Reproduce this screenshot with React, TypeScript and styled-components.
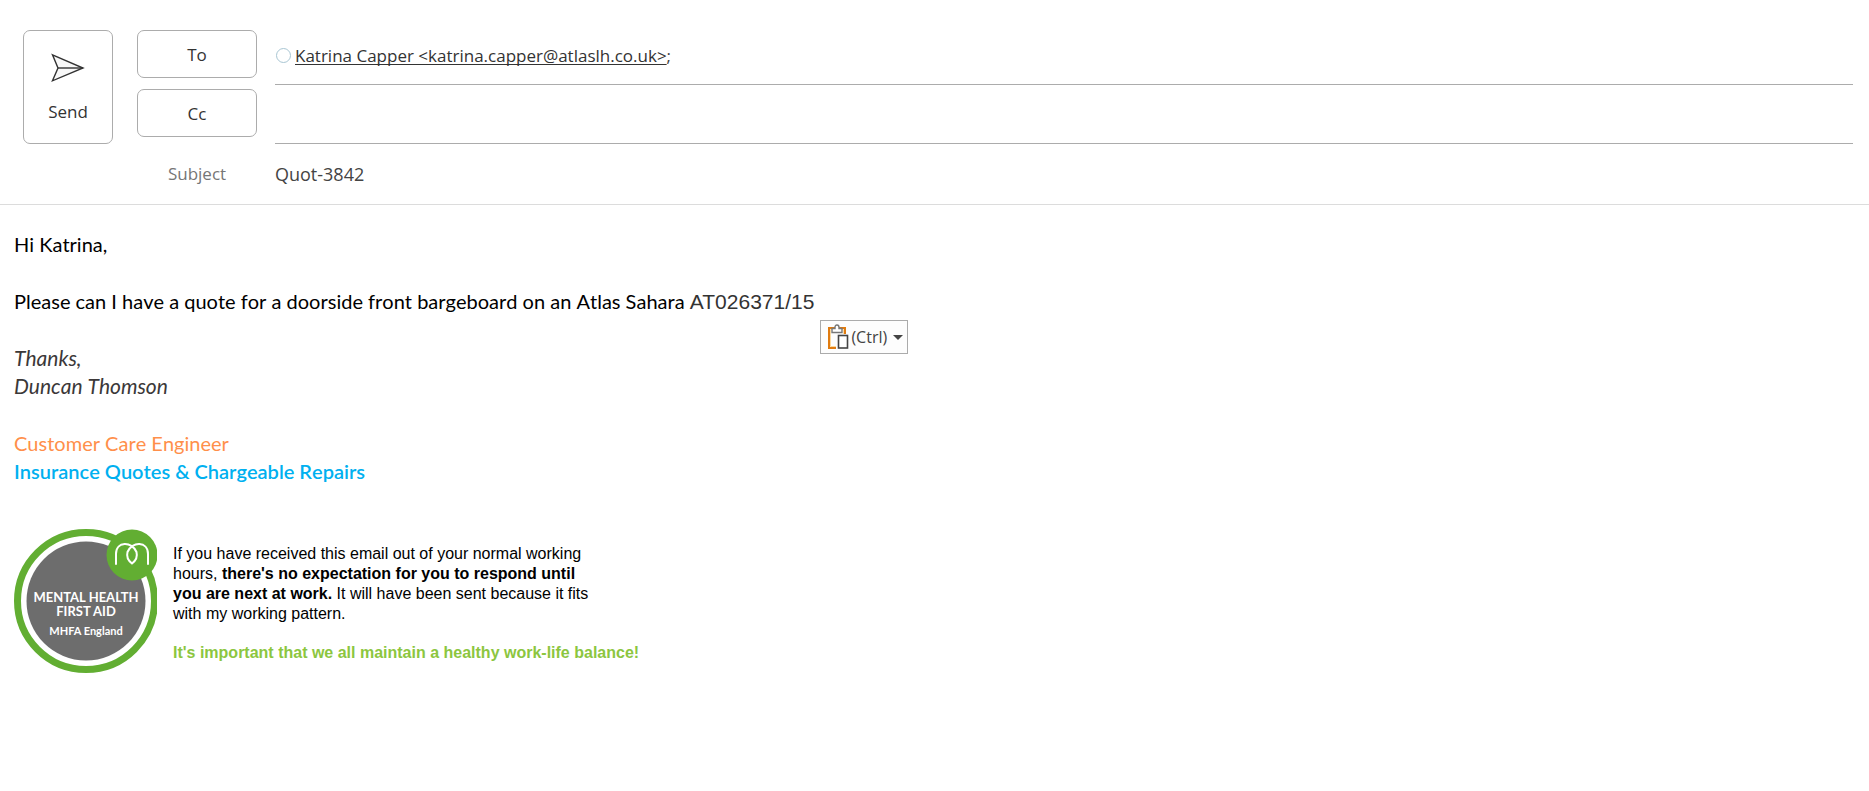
import React from "react";
import styled, { createGlobalStyle } from "styled-components";

const uiFont = `"Open Sans", "Noto Sans", sans-serif`;
const bodyFont = `Lato, "Open Sans", sans-serif`;
const arial = `"Liberation Sans", Arial, sans-serif`;

const GlobalStyle = createGlobalStyle`
  *, *::before, *::after { box-sizing: border-box; }
  body { margin: 0; background: #fff; color: #000; font-family: ${uiFont}; }
`;

const Header = styled.header`
  display: grid;
  grid-template-columns: 90px 120px minmax(0, 1fr);
  column-gap: 24px;
  padding: 30px 16px 0 23px;
  border-bottom: 1px solid #dcdcdc;
`;

const OutlineButton = styled.button`
  display: flex;
  align-items: center;
  justify-content: center;
  padding: 2px 0 0;
  border: 1px solid #acacac;
  border-radius: 7px;
  background: #fff;
  color: #333;
  font: 17px/24px ${uiFont};
`;

const SendButton = styled(OutlineButton)`
  flex-direction: column;
  gap: 17px;
  height: 114px;
`;

const LabelColumn = styled.div`
  display: flex;
  flex-direction: column;
  gap: 11px;
`;

const FieldButton = styled(OutlineButton)`
  height: 48px;
`;

const SubjectLabel = styled.label`
  height: 56px;
  padding-top: 13px;
  text-align: center;
  color: #767676;
  font-size: 17px;
  line-height: 26px;
`;

const FieldColumn = styled.div`
  display: flex;
  flex-direction: column;
  margin-left: -6px;
`;

const AddressRow = styled.div<{ $tall?: boolean }>`
  display: flex;
  align-items: center;
  gap: 4px;
  height: ${(p) => (p.$tall ? 59 : 55)}px;
  padding-bottom: ${(p) => (p.$tall ? 0 : 2)}px;
  border-bottom: 1px solid #acacac;
  color: #444;
  font-size: 17px;
  line-height: 22px;
`;

const Presence = styled.span`
  width: 15px;
  height: 15px;
  margin: 0 0 2px 1px;
  border: 1px solid #a9c6d3;
  border-radius: 50%;
`;

const Recipient = styled.a`
  color: #333;
  text-decoration: underline;
  text-decoration-thickness: 1px;
  text-underline-offset: 2px;
  text-decoration-skip-ink: none;
`;

const TextField = styled.input`
  width: 100%;
  padding: 0;
  border: 0;
  outline: 0;
  background: transparent;
  color: #444;
  font: 18px/26px ${uiFont};
`;

const SubjectRow = styled.div`
  padding-top: 17px;
`;

const Message = styled.main`
  padding: 25px 14px;
  font-family: ${bodyFont};
  font-size: 20px;
  font-kerning: none;
  line-height: 28px;
`;

const Paragraph = styled.p`
  margin: 0 0 29px;
`;

const SignOff = styled(Paragraph)`
  color: #3b3838;
  font-size: 21px;
  font-style: italic;
`;

const Serial = styled.span`
  position: relative;
  color: #333;
  font-family: ${arial};
  font-size: 21px;
  font-kerning: auto;
  line-height: 1;
`;

const PasteOptions = styled.button`
  position: absolute;
  top: 30px;
  left: calc(100% + 6px);
  display: flex;
  align-items: center;
  width: 88px;
  height: 34px;
  padding: 0 4px 0 6px;
  gap: 2px;
  border: 1px solid #ababab;
  background: #fdfdfd;
  color: #444;
  font: 16px/22px ${uiFont};
`;

const Caret = styled.span`
  margin-left: auto;
  border: 5px solid transparent;
  border-top-color: #444;
  border-bottom: 0;
`;

const Role = styled.div<{ $color: string; $strong?: boolean }>`
  color: ${(p) => p.$color};
  font-weight: ${(p) => (p.$strong ? 600 : 400)};
`;

const Footer = styled.footer`
  display: flex;
  gap: 16px;
  margin-top: 44px;
`;

const Notice = styled.div`
  width: 480px;
  padding-top: 15px;
  font-family: ${arial};
  font-size: 16px;
  font-kerning: auto;
  line-height: 20px;
`;

const NoticeText = styled.p<{ $accent?: boolean }>`
  margin: 0 0 19px;
  color: ${(p) => (p.$accent ? "#8cc63f" : "#000")};
  font-weight: ${(p) => (p.$accent ? 700 : 400)};
`;

const BadgeText = styled.g`
  fill: #fff;
  font-family: ${bodyFont};
  font-weight: 700;
  font-kerning: auto;
  text-anchor: middle;
`;

const SendIcon = () => (
  <svg width="34" height="30" viewBox="0 0 34 30" fill="none" stroke="#333" strokeWidth="1.4" aria-hidden="true">
    <path d="M1.5 1.8 32 15 1.5 27.8 7 15Z" fill="#f8f8f8" />
    <path d="M7 15H32" />
  </svg>
);

const PasteIcon = () => (
  <svg width="22" height="26" viewBox="0 0 22 26" fill="none" aria-hidden="true">
    <path d="M9 24H2V4H18V10" stroke="#e07b10" strokeWidth="2" />
    <path d="M9 22.5H3.5V5.500H16.500V10" stroke="#fbd9a0" strokeWidth="1" />
    <path d="M5 4.500H8V3.500Q8 1 10 1T12 3.500V4.500H15V8.500H5Z" fill="#fff" stroke="#777" strokeWidth="1.400" />
    <rect x="11.500" y="11.500" width="9" height="12.500" fill="#fff" stroke="#444" strokeWidth="1.600" />
  </svg>
);

const Badge = () => (
  <svg width="143" height="144" viewBox="0 0 143 144" role="img" aria-label="Mental Health First Aid, MHFA England">
    <circle cx="72" cy="72" r="68.500" fill="#fff" stroke="#62ae32" strokeWidth="7" />
    <circle cx="72" cy="72" r="59.500" fill="#6d6d6d" />
    <circle cx="118" cy="26" r="25.500" fill="#62ae32" />
    <g fill="none" stroke="#fff" strokeWidth="2" strokeLinecap="round">
      <path d="M102 35V25C102 12 118 12 122.500 23C124 29 120 33 118 34.500C116 33 112 29 113.500 23C118 12 134 12 134 25V35" />
    </g>
    <BadgeText>
      <text x="72" y="73" fontSize="13">MENTAL HEALTH</text>
      <text x="72" y="87" fontSize="13">FIRST AID</text>
      <text x="72" y="106" fontSize="11">MHFA England</text>
    </BadgeText>
  </svg>
);

export default function App() {
  return (
    <>
      <GlobalStyle />
      <Header>
        <SendButton type="button">
          <SendIcon />
          Send
        </SendButton>
        <LabelColumn>
          <FieldButton type="button">To</FieldButton>
          <FieldButton type="button">Cc</FieldButton>
          <SubjectLabel htmlFor="subject">Subject</SubjectLabel>
        </LabelColumn>
        <FieldColumn>
          <AddressRow>
            <Presence />
            <span>
              <Recipient href="mailto:katrina.capper@atlaslh.co.uk">
                Katrina Capper &lt;katrina.capper@atlaslh.co.uk&gt;
              </Recipient>
              ;
            </span>
          </AddressRow>
          <AddressRow $tall>
            <TextField type="text" aria-label="Cc" />
          </AddressRow>
          <SubjectRow>
            <TextField id="subject" type="text" defaultValue="Quot-3842" />
          </SubjectRow>
        </FieldColumn>
      </Header>
      <Message>
        <Paragraph>Hi Katrina,</Paragraph>
        <Paragraph>
          Please can I have a quote for a doorside front bargeboard on an Atlas Sahara{" "}
          <Serial>
            AT026371/15
            <PasteOptions type="button">
              <PasteIcon />
              (Ctrl)
              <Caret />
            </PasteOptions>
          </Serial>
        </Paragraph>
        <SignOff>
          Thanks,
          <br />
          Duncan Thomson
        </SignOff>
        <Role $color="#ff8f4a">Customer Care Engineer</Role>
        <Role $color="#00b0f0" $strong>
          Insurance Quotes &amp; Chargeable Repairs
        </Role>
        <Footer>
          <Badge />
          <Notice>
            <NoticeText>
              If you have received this email out of your normal working
              <br />
              hours, <strong>there's no expectation for you to respond until</strong>
              <br />
              <strong>you are next at work.</strong> It will have been sent because it fits
              <br />
              with my working pattern.
            </NoticeText>
            <NoticeText $accent>It's important that we all maintain a healthy work-life balance!</NoticeText>
          </Notice>
        </Footer>
      </Message>
    </>
  );
}
